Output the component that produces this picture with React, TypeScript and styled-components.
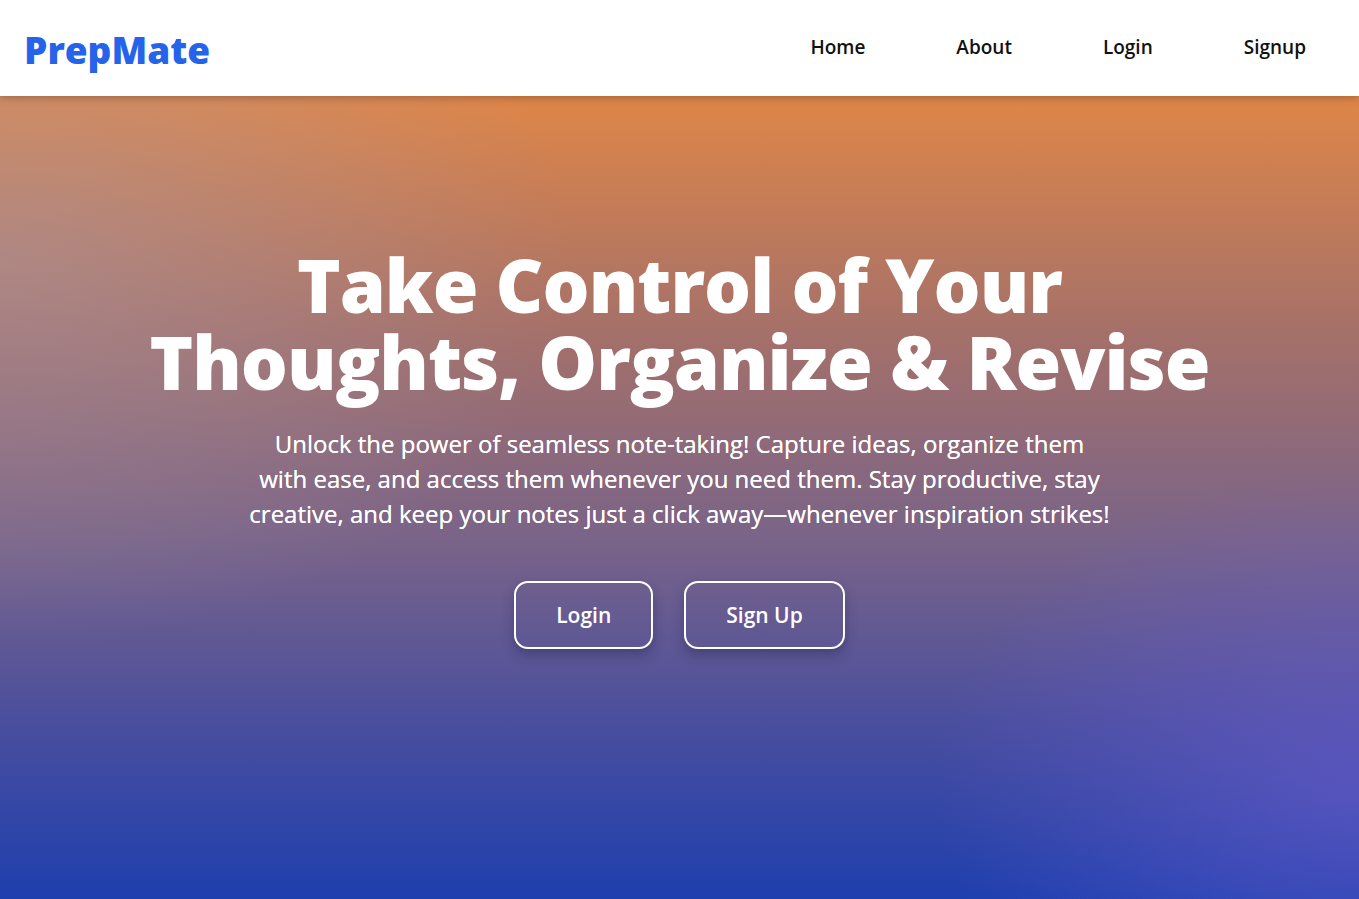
import React from "react";
import styled, { createGlobalStyle } from "styled-components";

const Global = createGlobalStyle`
  html, body { margin: 0; padding: 0; }
  body { font-family: "Open Sans", "Noto Sans", sans-serif; }
  * { box-sizing: border-box; }
`;

const Page = styled.div`
  width: 100%;
  height: 899px;
  display: flex;
  flex-direction: column;
  overflow: hidden;
`;

const Header = styled.header`
  height: 96px;
  flex: none;
  background: #ffffff;
  display: flex;
  align-items: center;
  justify-content: space-between;
  padding: 0 53px 0 24px;
  box-shadow: 0 2px 8px rgba(0, 0, 0, 0.25);
  position: relative;
  z-index: 1;
`;

const Logo = styled.div`
  font-family: "Open Sans", sans-serif;
  font-weight: 800;
  font-size: 37px;
  color: #2563eb;
  margin-top: 2px;
`;

const Nav = styled.nav`
  display: flex;
  gap: 91px;
  align-items: center;
`;

const NavLink = styled.a`
  font-family: "Open Sans", sans-serif;
  font-size: 19px;
  font-weight: 600;
  color: #111;
  text-decoration: none;
  margin-top: -2px;
`;

const Hero = styled.main`
  flex: 1;
  display: flex;
  flex-direction: column;
  align-items: center;
  padding-top: 150px;
  color: #fff;
  text-align: center;
  background:
    radial-gradient(ellipse 45% 55% at 100% 85%, rgba(110, 95, 210, 0.55), rgba(110, 95, 210, 0) 70%),
    radial-gradient(ellipse 60% 70% at 0% 20%, rgba(165, 155, 175, 0.45), rgba(165, 155, 175, 0) 70%),
    linear-gradient(180deg, #df8648 0%, #a4706a 30%, #7a6488 55%, #4a4e9e 78%, #1e3fae 100%);
`;

const Title = styled.h1`
  margin: 0;
  font-family: "Open Sans", sans-serif;
  font-weight: 800;
  font-size: 74px;
  line-height: 77px;
  letter-spacing: -1px;
  max-width: 1100px;
`;

const Lead = styled.p`
  margin: 26px 0 0;
  font-family: "Open Sans", sans-serif;
  font-size: 24px;
  line-height: 35px;
  font-weight: 500;
  max-width: 900px;
  text-shadow: 0 0 0.4px #fff;
`;

const Actions = styled.div`
  display: flex;
  gap: 31px;
  margin-top: 50px;
`;

const Button = styled.button`
  height: 68px;
  padding: 0 40px;
  border: 2px solid #fff;
  border-radius: 14px;
  background: transparent;
  color: #fff;
  font-family: "Open Sans", sans-serif;
  font-size: 21px;
  font-weight: 600;
  box-shadow: 0 6px 12px rgba(30, 30, 60, 0.35);
  cursor: pointer;
`;

export default function App() {
  return (
    <Page>
      <Global />
      <Header>
        <Logo>PrepMate</Logo>
        <Nav>
          <NavLink href="#">Home</NavLink>
          <NavLink href="#">About</NavLink>
          <NavLink href="#">Login</NavLink>
          <NavLink href="#">Signup</NavLink>
        </Nav>
      </Header>
      <Hero>
        <Title>
          Take Control of Your
          <br />
          Thoughts, Organize &amp; Revise
        </Title>
        <Lead>
          Unlock the power of seamless note-taking! Capture ideas, organize them
          <br />
          with ease, and access them whenever you need them. Stay productive, stay
          <br />
          creative, and keep your notes just a click away—whenever inspiration strikes!
        </Lead>
        <Actions>
          <Button>Login</Button>
          <Button>Sign Up</Button>
        </Actions>
      </Hero>
    </Page>
  );
}
